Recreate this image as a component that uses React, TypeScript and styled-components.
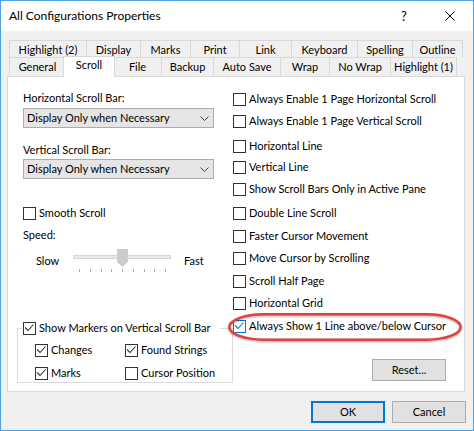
import React from "react";
import styled, { createGlobalStyle, css } from "styled-components";

const FONT = `Lato, "Liberation Sans", sans-serif`;

const GlobalStyle = createGlobalStyle`
  html, body { margin: 0; padding: 0; background: #ffffff; }
  * { box-sizing: border-box; }
`;

const Window = styled.div`
  width: 474px;
  height: 431px;
  border: 1px solid #4ea0e4;
  background: #f0f0f0;
  display: flex;
  flex-direction: column;
  font-family: ${FONT};
  font-size: 11px;
  line-height: 14px;
  color: #000;
  overflow: hidden;
`;

const TitleBar = styled.div`
  height: 30px;
  flex-shrink: 0;
  background: #fff;
  display: flex;
  align-items: center;
  padding-left: 8px;
`;

const Title = styled.div`
  flex: 1;
  font-size: 12px;
`;

const CaptionButton = styled.div`
  width: 46px;
  height: 30px;
  display: flex;
  align-items: center;
  justify-content: center;
  font-size: 13px;
`;

const Body = styled.div`
  flex: 1;
  display: flex;
  flex-direction: column;
  padding: 9px 8px 0 6px;
`;

const TabRow = styled.div<{ $h: number }>`
  display: flex;
  height: ${(p) => p.$h}px;
  padding-left: 2px;
`;

const Tab = styled.div<{ $w: number; $last?: boolean; $sel?: boolean; $back?: boolean }>`
  width: ${(p) => p.$w}px;
  height: 100%;
  border: 1px solid #d9d9d9;
  border-bottom: none;
  border-right-width: ${(p) => (p.$last ? 1 : 0)}px;
  background: #f0f0f0;
  display: flex;
  align-items: center;
  justify-content: center;
  white-space: nowrap;
  padding-top: ${(p) => (p.$back ? 2 : 0)}px;
  ${(p) =>
    p.$sel &&
    css`
      width: ${p.$w + 4}px;
      height: calc(100% + 2px);
      margin: -1px -2px -1px;
      border-right-width: 1px;
      background: #fff;
      position: relative;
      z-index: 2;
      padding-bottom: 4px;
    `}
`;

const Panel = styled.div`
  position: relative;
  z-index: 1;
  height: 316px;
  flex-shrink: 0;
  background: #fff;
  border: 1px solid #d9d9d9;
  display: flex;
`;

const LeftCol = styled.div`
  width: 231px;
  padding-left: 15px;
  display: flex;
  flex-direction: column;
`;

const RightCol = styled.div`
  flex: 1;
  display: flex;
  flex-direction: column;
  padding-right: 18px;
`;

const FieldLabel = styled.div<{ $mt: number }>`
  margin-top: ${(p) => p.$mt}px;
  height: 14px;
  white-space: nowrap;
`;

const Combo = styled.div<{ $mt: number }>`
  margin-top: ${(p) => p.$mt}px;
  width: 191px;
  height: 20px;
  border: 1px solid #acacac;
  background: #e5e5e5;
  display: flex;
  align-items: center;
  justify-content: space-between;
  padding: 0 4px 0 3px;
  white-space: nowrap;
`;

const CheckRow = styled.div<{ $mt?: number }>`
  display: flex;
  align-items: center;
  gap: 3px;
  height: 14px;
  margin-top: ${(p) => p.$mt ?? 0}px;
  white-space: nowrap;
`;

const Box = styled.span<{ $accent?: boolean }>`
  width: 13px;
  height: 13px;
  flex-shrink: 0;
  border: 1px solid ${(p) => (p.$accent ? "#0078d7" : "#333333")};
  background: #fff;
  display: flex;
  align-items: center;
  justify-content: center;
`;

const SliderRow = styled.div`
  margin-top: 6px;
  height: 26px;
  display: flex;
  align-items: center;
`;

const SlowLabel = styled.span`
  margin-left: 13px;
  width: 37px;
`;

const FastLabel = styled.span`
  margin-left: 13px;
`;

const Slider = styled.div`
  position: relative;
  width: 98px;
  height: 26px;
  display: flex;
  flex-direction: column;
  padding-top: 7px;
`;

const Track = styled.div`
  height: 4px;
  background: #e7eaea;
  border: 1px solid #d6d6d6;
`;

const Ticks = styled.div`
  display: flex;
  justify-content: space-between;
  margin-top: 10px;
  padding: 0 5px 0 6px;
`;

const Tick = styled.span`
  width: 1px;
  height: 3px;
  background: #a8a8a8;
`;

const Thumb = styled.svg`
  position: absolute;
  left: 44px;
  top: 1px;
`;

const Group = styled.div`
  margin-top: 54px;
  margin-left: -6px;
  width: 216px;
  height: 55px;
  border: 1px solid #dcdcdc;
  padding-left: 5px;
  display: flex;
  flex-direction: column;
`;

const Legend = styled.div`
  margin-top: -8px;
  margin-left: -1px;
  padding-left: 1px;
  width: 198px;
  background: #fff;
`;

const GroupGrid = styled.div`
  display: grid;
  grid-template-columns: 90px auto;
  row-gap: 9px;
  margin: 8px 0 0 12px;
`;

const Button = styled.div<{ $default?: boolean; $mt?: number }>`
  width: 74px;
  height: 22px;
  border: 1px solid ${(p) => (p.$default ? "#0078d7" : "#adadad")};
  box-shadow: ${(p) => (p.$default ? "inset 0 0 0 1px #0078d7" : "none")};
  background: #e1e1e1;
  display: flex;
  align-items: center;
  justify-content: center;
  margin-top: ${(p) => p.$mt ?? 0}px;
`;

const ResetButton = styled(Button)`
  align-self: flex-end;
`;

const Footer = styled.div`
  display: flex;
  justify-content: flex-end;
  gap: 7px;
  margin-top: 9px;
  margin-right: -1px;
`;

const Highlight = styled.svg`
  position: absolute;
  left: 220px;
  top: 236px;
  overflow: visible;
  filter: drop-shadow(0 1px 1.2px rgba(0, 0, 0, 0.35));
  pointer-events: none;
`;

const CheckMark = ({ color }: { color: string }) => (
  <svg width="11" height="11" viewBox="0 0 11 11">
    <polyline points="1,4.5 4,7.5 9.5,1.5" fill="none" stroke={color} strokeWidth="1.1" />
  </svg>
);

const Check = ({
  label,
  checked,
  accent,
  mt,
}: {
  label: string;
  checked?: boolean;
  accent?: boolean;
  mt?: number;
}) => (
  <CheckRow $mt={mt}>
    <Box $accent={accent}>{checked && <CheckMark color={accent ? "#0078d7" : "#333333"} />}</Box>
    <span>{label}</span>
  </CheckRow>
);

const Chevron = () => (
  <svg width="9" height="5" viewBox="0 0 9 5">
    <polyline points="0.5,0.5 4.5,4.5 8.5,0.5" fill="none" stroke="#404040" strokeWidth="1" />
  </svg>
);

const backTabs: [string, number][] = [
  ["Highlight (2)", 77],
  ["Display", 54],
  ["Marks", 50],
  ["Print", 49],
  ["Link", 52],
  ["Keyboard", 66],
  ["Spelling", 55],
  ["Outline", 51],
];

const frontTabs: [string, number][] = [
  ["General", 56],
  ["Scroll", 48],
  ["File", 48],
  ["Backup", 52],
  ["Auto Save", 67],
  ["Wrap", 49],
  ["No Wrap", 61],
  ["Highlight (1)", 67],
];

const rightOptions: { label: string; mt: number; checked?: boolean; accent?: boolean }[] = [
  { label: "Always Enable 1 Page Horizontal Scroll", mt: 15 },
  { label: "Always Enable 1 Page Vertical Scroll", mt: 8 },
  { label: "Horizontal Line", mt: 11 },
  { label: "Vertical Line", mt: 7 },
  { label: "Show Scroll Bars Only in Active Pane", mt: 8 },
  { label: "Double Line Scroll", mt: 10 },
  { label: "Faster Cursor Movement", mt: 9 },
  { label: "Move Cursor by Scrolling", mt: 8 },
  { label: "Scroll Half Page", mt: 9 },
  { label: "Horizontal Grid", mt: 8 },
  { label: "Always Show 1 Line above/below Cursor", mt: 9, checked: true, accent: true },
];

export default function App() {
  return (
    <>
      <GlobalStyle />
      <Window>
        <TitleBar>
          <Title>All Configurations Properties</Title>
          <CaptionButton>?</CaptionButton>
          <CaptionButton>
            <svg width="10" height="10" viewBox="0 0 10 10">
              <path d="M0.5,0.5 L9.5,9.5 M9.5,0.5 L0.5,9.5" stroke="#000" strokeWidth="1" />
            </svg>
          </CaptionButton>
        </TitleBar>
        <Body>
          <TabRow $h={17}>
            {backTabs.map(([t, w], i) => (
              <Tab key={t} $w={w} $back $last={i === backTabs.length - 1}>
                {t}
              </Tab>
            ))}
          </TabRow>
          <TabRow $h={19}>
            {frontTabs.map(([t, w], i) => (
              <Tab key={t} $w={w} $sel={t === "Scroll"} $last={i === frontTabs.length - 1}>
                {t}
              </Tab>
            ))}
          </TabRow>
          <Panel>
            <LeftCol>
              <FieldLabel $mt={14}>Horizontal Scroll Bar:</FieldLabel>
              <Combo $mt={3}>
                <span>Display Only when Necessary</span>
                <Chevron />
              </Combo>
              <FieldLabel $mt={15}>Vertical Scroll Bar:</FieldLabel>
              <Combo $mt={2}>
                <span>Display Only when Necessary</span>
                <Chevron />
              </Combo>
              <Check label="Smooth Scroll" mt={27} />
              <FieldLabel $mt={8}>Speed:</FieldLabel>
              <SliderRow>
                <SlowLabel>Slow</SlowLabel>
                <Slider>
                  <Track />
                  <Ticks>
                    {Array.from({ length: 9 }).map((_, i) => (
                      <Tick key={i} />
                    ))}
                  </Ticks>
                  <Thumb width="11" height="18" viewBox="0 0 11 18">
                    <path d="M0,0 H11 V13 L5.5,18 L0,13 Z" fill="#cccccc" />
                  </Thumb>
                </Slider>
                <FastLabel>Fast</FastLabel>
              </SliderRow>
              <Group>
                <Legend>
                  <Check label="Show Markers on Vertical Scroll Bar" checked />
                </Legend>
                <GroupGrid>
                  <Check label="Changes" checked />
                  <Check label="Found Strings" checked />
                  <Check label="Marks" checked />
                  <Check label="Cursor Position" />
                </GroupGrid>
              </Group>
            </LeftCol>
            <RightCol>
              {rightOptions.map((o) => (
                <Check key={o.label} label={o.label} mt={o.mt} checked={o.checked} accent={o.accent} />
              ))}
              <ResetButton $mt={26}>Reset...</ResetButton>
            </RightCol>
            <Highlight width="234" height="28" viewBox="0 0 234 28">
              <rect x="1.3" y="1.3" width="231.4" height="25.4" rx="34" ry="12.7" fill="none" stroke="#e2403e" strokeWidth="2.4" />
            </Highlight>
          </Panel>
          <Footer>
            <Button $default>OK</Button>
            <Button>Cancel</Button>
          </Footer>
        </Body>
      </Window>
    </>
  );
}
